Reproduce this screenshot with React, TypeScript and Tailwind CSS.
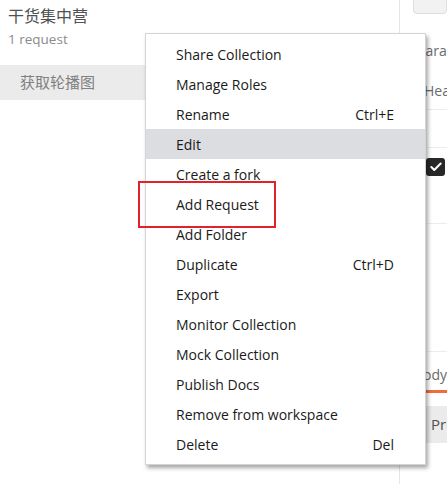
import { Check } from 'lucide-react';

const items: { label: string; shortcut?: string; active?: boolean }[] = [
  { label: 'Share Collection' },
  { label: 'Manage Roles' },
  { label: 'Rename', shortcut: 'Ctrl+E' },
  { label: 'Edit', active: true },
  { label: 'Create a fork' },
  { label: 'Add Request' },
  { label: 'Add Folder' },
  { label: 'Duplicate', shortcut: 'Ctrl+D' },
  { label: 'Export' },
  { label: 'Monitor Collection' },
  { label: 'Mock Collection' },
  { label: 'Publish Docs' },
  { label: 'Remove from workspace' },
  { label: 'Delete', shortcut: 'Del' },
];

export default function App() {
  return (
    <div className="relative flex w-[447px] h-[484px] overflow-hidden bg-white font-['Open_Sans','Noto_Sans_CJK_SC',sans-serif]">
      {/* sidebar */}
      <div className="w-[400px] shrink-0 border-r border-[#e6e6e6] flex flex-col">
        <div className="pl-2 pt-[5px] text-[16px] leading-[22px] text-[#505050]">干货集中营</div>
        <div className="pl-2 pt-[2px] text-[13.5px] leading-[20px] text-[#8a8a8a]">1 request</div>
        <div className="mt-[16px] h-[35px] bg-[#ebebeb] flex items-center pl-5 text-[15px] text-[#808080]">获取轮播图</div>
      </div>

      {/* request pane (mostly covered) */}
      <div className="flex-1 min-w-0 overflow-hidden relative flex flex-col text-[14px] text-[#6b6b6b] whitespace-nowrap">
        <div className="ml-[13px] h-[16px] -mt-[2px] rounded-b-[4px] border border-[#dedede] bg-[#f2f2f2]" />
        <div className="mt-[27px] ml-[17px] leading-[20px]">Params</div>
        <div className="mt-[20px] ml-[24px] leading-[20px]">Headers</div>
        <div className="mt-[8px] ml-[27px] border-t border-[#ececec]" />
        <div className="mt-[37px] ml-[27px] border-t border-[#ececec]" />
        <div className="mt-[10px] ml-[26px] w-[19px] h-[18px] rounded-[3px] bg-[#282828] flex items-center justify-center">
          <Check className="w-[14px] h-[14px] text-white" strokeWidth={3.5} />
        </div>
        <div className="mt-[47px] ml-[27px] border-t border-[#ececec]" />
        <div className="mt-[127px] ml-[27px] border-t border-[#ececec]" />
        <div className="mt-[13px] ml-[14px] leading-[20px]">Body</div>
        <div className="mt-[5px] h-[3px] bg-[#f26b3a]" />
        <div className="mt-[13px] h-[37px] bg-[#ebebeb] flex items-center pl-[31px] text-[15px] text-[#505050]">Pre</div>
      </div>

      {/* context menu */}
      <div className="absolute left-[145px] top-[33px] w-[281px] bg-white border border-[#d4d4d4] shadow-[2px_3px_4px_rgba(0,0,0,0.35)] py-[5px] font-['Open_Sans',sans-serif]">
        {items.map((it) => (
          <div
            key={it.label}
            className={`h-[30px] flex items-center justify-between pl-[30px] pr-[31px] text-[14px] text-[#1a1a1a] ${it.active ? 'bg-[#dcdde1]' : ''}`}
          >
            <span>{it.label}</span>
            {it.shortcut && <span>{it.shortcut}</span>}
          </div>
        ))}
      </div>

      {/* annotation */}
      <div className="absolute left-[138px] top-[181px] w-[138px] h-[47px] border-2 border-[#e2212b]" />
    </div>
  );
}
